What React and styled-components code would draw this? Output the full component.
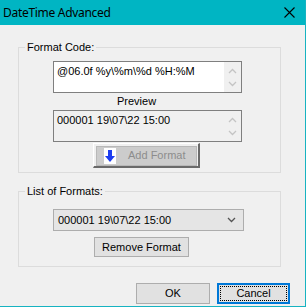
import React from 'react';
import styled, { createGlobalStyle } from 'styled-components';

const GlobalStyle = createGlobalStyle`
	html, body {
		margin: 0;
		padding: 0;
		background: #f0f0f0;
		overflow: hidden;
	}
	* {
		box-sizing: border-box;
	}
`;

const Chevron = ({ up, color = '#c4c4c4' }) => (
	<svg width='9' height='6' viewBox='0 0 9 6'>
		<polyline
			points={up ? '1,5 4.5,1.5 8,5' : '1,1 4.5,4.5 8,1'}
			fill='none'
			stroke={color}
			strokeWidth='1.3'
		/>
	</svg>
);

const ArrowIcon = () => (
	<IconBox>
		<svg width='12' height='16' viewBox='0 0 12 16'>
			<rect x='4' y='2' width='4' height='6' fill='#1c3cf0' />
			<polygon points='1,8 11,8 6,14' fill='#1c3cf0' />
		</svg>
	</IconBox>
);

const App = () => {
	return (
		<>
			<GlobalStyle />
			<Window>
				<TitleBar>
					<Title>DateTime Advanced</Title>
					<svg width='11' height='11' viewBox='0 0 11 11'>
						<path d='M0.5 0.5 L10.5 10.5 M10.5 0.5 L0.5 10.5' stroke='#000' strokeWidth='1.1' />
					</svg>
				</TitleBar>
				<Body>
					<Group>
						<Legend>Format Code:</Legend>
						<GroupBody $pt={7} $pb={4}>
							<TextBox>
								<TextValue>@06.0f %y\%m\%d %H:%M</TextValue>
								<ScrollBar>
									<Chevron up />
									<Chevron />
								</ScrollBar>
							</TextBox>
							<Caption>Preview</Caption>
							<TextBox $readOnly>
								<TextValue>000001 19\07\22 15:00</TextValue>
								<ScrollBar>
									<Chevron up />
									<Chevron />
								</ScrollBar>
							</TextBox>
							<ClassicButton disabled>
								<ClassicFace>
									<ArrowIcon />
									<span>Add Format</span>
								</ClassicFace>
							</ClassicButton>
						</GroupBody>
					</Group>
					<Group $mt={12}>
						<Legend>List of Formats:</Legend>
						<GroupBody $pt={11} $pb={9}>
							<Combo>
								<span>000001 19\07\22 15:00</span>
								<Chevron color='#555' />
							</Combo>
							<PushButton $w={95} $h={20} $ml={41} $mt={6}>
								Remove Format
							</PushButton>
						</GroupBody>
					</Group>
					<Footer>
						<PushButton $w={74} $h={21}>
							OK
						</PushButton>
						<PushButton $w={73} $h={21} $focused>
							<FocusRing>Cancel</FocusRing>
						</PushButton>
					</Footer>
				</Body>
			</Window>
		</>
	);
};

const Window = styled.div`
	width: 306px;
	height: 307px;
	background: #f0f0f0;
	border-right: 1px solid #17b3c1;
	border-bottom: 1px solid #17b3c1;
	font-family: 'Liberation Sans', Arial, sans-serif;
	font-size: 11px;
	line-height: 13px;
	color: #000;
`;

const TitleBar = styled.div`
	height: 25px;
	background: #00b5c3;
	display: flex;
	align-items: center;
	justify-content: space-between;
	padding: 0 10px 0 3px;
`;

const Title = styled.div`
	font-family: 'Noto Sans', 'Open Sans', sans-serif;
	font-size: 12px;
	line-height: 16px;
	color: #000;
	letter-spacing: -0.3px;
`;

const Body = styled.div`
	padding: 16px 0 0 18px;
`;

const Group = styled.fieldset`
	width: 263px;
	margin: ${(p) => p.$mt || 0}px 0 0 0;
	padding: 0;
	border: 1px solid #dcdcdc;
	min-inline-size: 0;
`;

const Legend = styled.legend`
	margin-left: 6px;
	padding: 0 2px;
	line-height: 13px;
`;

const GroupBody = styled.div`
	padding: ${(p) => p.$pt}px 0 ${(p) => p.$pb}px 34px;
`;

const TextBox = styled.div`
	width: 189px;
	height: 32px;
	border: 1px solid #7f7f7f;
	background: ${(p) => (p.$readOnly ? '#f0f0f0' : '#fff')};
	display: flex;
	justify-content: space-between;
`;

const TextValue = styled.div`
	padding: 3px 0 0 3px;
	white-space: nowrap;
`;

const ScrollBar = styled.div`
	width: 17px;
	background: #f0f0f0;
	display: flex;
	flex-direction: column;
	align-items: center;
	justify-content: space-around;
	padding: 2px 0;
`;

const Caption = styled.div`
	margin: 2px 0 2px 64px;
`;

const ClassicButton = styled.button`
	display: block;
	margin: 1px 0 0 40px;
	width: 107px;
	height: 25px;
	padding: 1px 0 0 2px;
	background: #f0f0f0;
	border-style: solid;
	border-width: 1px 2px 2px 1px;
	border-color: #fff #6a6a6a #6a6a6a #fff;
	font: inherit;
`;

const ClassicFace = styled.div`
	width: 101px;
	height: 20px;
	background: #cccccc;
	border: 1px solid #b8b8b8;
	display: flex;
	align-items: center;
	gap: 12px;
	padding-left: 7px;
	color: #8c8c8c;
	font-size: 11px;
`;

const IconBox = styled.span`
	display: flex;
	width: 12px;
	height: 16px;
	background: #fff;
`;

const Combo = styled.div`
	width: 191px;
	height: 22px;
	border: 1px solid #adadad;
	background: #e5e5e5;
	display: flex;
	align-items: center;
	justify-content: space-between;
	padding: 0 7px 0 4px;
`;

const PushButton = styled.button`
	display: block;
	width: ${(p) => p.$w}px;
	height: ${(p) => p.$h}px;
	margin: ${(p) => p.$mt || 0}px 0 0 ${(p) => p.$ml || 0}px;
	padding: 0;
	background: #e1e1e1;
	border: ${(p) => (p.$focused ? '2px solid #0078d7' : '1px solid #adadad')};
	font: inherit;
	color: #000;
	text-align: center;
`;

const FocusRing = styled.div`
	margin: 1px;
	height: calc(100% - 2px);
	border: 1px dotted #000;
	display: flex;
	align-items: center;
	justify-content: center;
`;

const Footer = styled.div`
	margin-top: 16px;
	padding-right: 15px;
	display: flex;
	justify-content: flex-end;
	gap: 7px;
`;

export default App;
